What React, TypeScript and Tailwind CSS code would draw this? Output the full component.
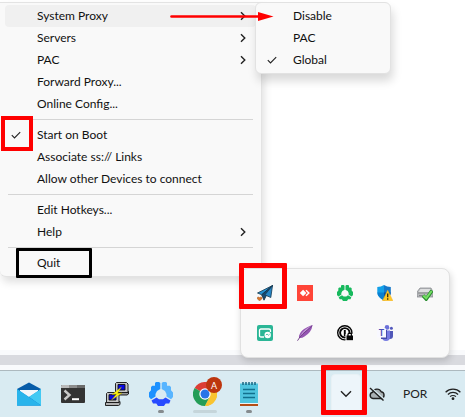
import type { ReactNode } from "react";

function Check() {
  return (
    <svg viewBox="0 0 10 10" className="h-[10px] w-[10px]" fill="none" stroke="#222" strokeWidth="1.1">
      <path d="M.8 5.2 3.5 8 9.2 2.2" />
    </svg>
  );
}

function Chevron() {
  return (
    <svg viewBox="0 0 6 10" className="h-[10px] w-[6px]" fill="none" stroke="#222" strokeWidth="1.4">
      <path d="M1 1.2 4.8 5 1 8.8" />
    </svg>
  );
}

type ItemProps = { label: string; checked?: boolean; submenu?: boolean; active?: boolean };

function Item({ label, checked, submenu, active }: ItemProps) {
  return (
    <button
      type="button"
      role={checked ? "menuitemcheckbox" : "menuitem"}
      aria-checked={checked}
      aria-haspopup={submenu ? "menu" : undefined}
      className={`flex h-[22px] w-full items-center rounded pr-[10px] text-left ${active ? "bg-[#f0f0f0]" : ""}`}
    >
      <span className="flex w-8 shrink-0 items-center pl-[6px]">{checked && <Check />}</span>
      <span className="flex-1 whitespace-nowrap">{label}</span>
      {submenu && <Chevron />}
    </button>
  );
}

function Separator() {
  return <hr className="mx-[3px] my-1 border-t border-[#d5d5d5]" />;
}

function MainMenu() {
  return (
    <div
      role="menu"
      aria-label="Shadowsocks"
      className="w-[262px] rounded-b-md border border-l-0 border-[#e3e3e3] bg-[#f9f9f9] px-[5px] py-[2px] shadow-[2px_5px_9px_rgba(0,0,0,0.13)]"
    >
      <Item label="System Proxy" submenu active />
      <Item label="Servers" submenu />
      <Item label="PAC" submenu />
      <Item label="Forward Proxy..." />
      <Item label="Online Config..." />
      <Separator />
      <Item label="Start on Boot" checked />
      <Item label="Associate ss:// Links" />
      <Item label="Allow other Devices to connect" />
      <Separator />
      <Item label="Edit Hotkeys..." />
      <Item label="Help" submenu />
      <Separator />
      <Item label="Quit" />
    </div>
  );
}

function ProxyMenu() {
  return (
    <div
      role="menu"
      aria-label="System Proxy"
      className="absolute top-[2px] left-[255px] w-[136px] rounded-md border border-[#e2e2e2] bg-[#f9f9f9] px-[5px] py-[2px] shadow-[2px_7px_10px_rgba(0,0,0,0.15)]"
    >
      <Item label="Disable" />
      <Item label="PAC" />
      <Item label="Global" checked />
    </div>
  );
}

function Plane() {
  return (
    <svg viewBox="0 0 16 16" className="h-4 w-4" strokeLinejoin="round">
      <path d="M15.5.5.5 8l4.200 1.800z" fill="#2490d0" stroke="#16384f" strokeWidth=".8" />
      <path d="M15.5.5 4.700 9.800l2.300 5.400 2-4z" fill="#174c73" stroke="#102c42" strokeWidth=".8" />
      <path d="M15.5.5 7.800 9.900l6 2.600z" fill="#2585c5" stroke="#16384f" strokeWidth=".8" />
      <path d="m2.600 16-2.400-2.300c-.5-1.600 1.400-2.400 2.400-1.100 1-1.300 2.900-.5 2.400 1.100z" fill="#d9782d" stroke="#955325" strokeWidth=".4" />
    </svg>
  );
}

function AnyDesk() {
  return (
    <svg viewBox="0 0 16 16" className="h-4 w-4">
      <path fill="#ff4538" d="M0 0h16v16H0z" />
      <path d="m6.100 4.700 3.300 3.300-3.300 3.300L2.800 8z" fill="#fff" />
      <path d="m9 5.200 2.800 2.800L9 10.800" fill="none" stroke="#fff" strokeWidth="1.500" />
    </svg>
  );
}

type RingProps = { size: string; left: string; right: string; bottom: string };

function TriRing({ size, left, right, bottom }: RingProps) {
  return (
    <svg viewBox="0 0 24 24" className={size}>
      <path d="M7 0h3l1.300 1v6L8 9l-1.500 3v2.500L2 17.200 0 15V10.500l2-2.300V5l1.300-1.300H6V1z" fill={left} />
      <path d="M17 0h-3l-1.300 1v6L16 9l1.500 3v2.500l4.500 2.700 2-2.200V10.500l-2-2.300V5l-1.300-1.300H18V1z" fill={right} />
      <path d="m2.500 18.500 5-3 2.500 1.700h4l2.500-1.700 5 3-1.300 3h-3.500L15 24H9l-1.700-2.500H4z" fill={bottom} />
    </svg>
  );
}

function Shield() {
  return (
    <svg viewBox="0 0 16 16" className="h-4 w-4">
      <path d="M7 0Q4 2 .3 2v5.500q0 4.500 6.700 8z" fill="#13a0e8" />
      <path d="M7 0q3 2 6.800 2v5.500q0 4.500-6.800 8z" fill="#1678ca" />
      <path d="M.3 7.500H7v8Q.6 12 .3 7.500z" fill="#0a7fd0" />
      <path d="M7 7.500h6.800Q13.500 12 7 15.500z" fill="#0754a5" />
      <path d="M10.700 5.200 15.800 15.700H5.500z" fill="#ffc928" stroke="#f3ad12" strokeWidth=".5" />
      <path d="M10.700 8.500v3.800m0 1v1.500" stroke="#33270a" strokeWidth="1.300" />
    </svg>
  );
}

function Drive() {
  return (
    <svg viewBox="0 0 16 16" className="h-4 w-4">
      <path d="M3 3h11l2 4v5H0V7z" fill="#b9bbbd" stroke="#808386" strokeWidth=".7" />
      <path d="M3.500 4h10L15 7H1.500z" fill="#dedfe0" />
      <path d="M1 8h14M2 10.500h5" stroke="#77797c" strokeWidth=".8" />
      <path d="m6 10.500 3.200 3.500L15 5.500" fill="none" stroke="#278b2d" strokeWidth="3.500" />
      <path d="m6.300 10.500 2.900 2.700L14.700 6" fill="none" stroke="#76e064" strokeWidth="2" />
    </svg>
  );
}

function ScreenShare() {
  return (
    <svg viewBox="0 0 16 16" className="h-4 w-4">
      <rect width="16" height="16" rx="2" fill="#2bb696" />
      <path d="M7 12H4q-1.500 0-1.500-1.500v-5Q2.500 4 4 4h8q1.500 0 1.500 1.500V7" fill="none" stroke="#fff" strokeWidth="1.300" />
      <circle cx="10.700" cy="10" r="3.200" fill="#fff" />
      <path d="m8.900 10 1.200-1 1.300 1.300 1.200-1" fill="none" stroke="#2bb696" strokeWidth=".8" />
    </svg>
  );
}

function Feather() {
  return (
    <svg viewBox="0 0 16 16" className="h-4 w-4">
      <path d="M15.500.3C12 1 5.500 4 3 8.500Q1.500 11 2 13q3 .3 5.500-1.500Q14.500 7.500 15.500.3z" fill="#9557b2" />
      <path d="M15 .8Q8 3.500 4 9.500q-1 1.500-1.500 3 3-3.500 6-6z" fill="#c69ad9" />
      <path d="M15.300.5Q10 5.500 6 8.700 3 11.500.5 15.700" fill="none" stroke="#683381" strokeWidth=".9" />
    </svg>
  );
}

function OnePassword() {
  return (
    <svg viewBox="0 0 16 16" className="h-4 w-4">
      <circle cx="7.800" cy="7.800" r="7.100" fill="#fff" stroke="#050505" strokeWidth="1.400" />
      <circle cx="7.800" cy="7.800" r="4.700" fill="#fff" stroke="#050505" strokeWidth="1.900" />
      <path d="M7.800 5v6" stroke="#050505" strokeWidth="1.900" />
      <path d="M8.500 9H16v7H8.500z" fill="#fff" />
      <path d="M9.500 10.500H16v4.700H9.500z" fill="#050505" />
      <path d="M11 11V9.500q0-1.400 1.700-1.400t1.700 1.400V11" fill="none" stroke="#050505" strokeWidth="1.200" />
    </svg>
  );
}

function Teams() {
  return (
    <span className="relative h-4 w-4">
      <svg viewBox="0 0 16 16" className="h-4 w-4">
        <circle cx="10" cy="2.400" r="2.300" fill="#6b70d9" />
        <circle cx="14.400" cy="3.300" r="1.500" fill="#5258bd" />
        <path d="M12 6h4v5q0 3-3 3h-1z" fill="#5057b8" />
        <path d="M5 5.500h8V12q0 4-4 4t-4-4z" fill="#777ce2" />
        <path d="M4 5h6v9H4z" fill="#454bab" />
        <path d="M0 3.500h9v9H0z" fill="#f8f8ff" />
      </svg>
      <span className="absolute top-[3px] left-0 w-[9px] text-center text-[9px] leading-[10px] font-bold text-[#4b50b6]">T</span>
    </span>
  );
}

const trayApps: { name: string; icon: ReactNode }[] = [
  { name: "Shadowsocks", icon: <Plane /> },
  { name: "AnyDesk", icon: <AnyDesk /> },
  { name: "Time tracker", icon: <TriRing size="h-4 w-4" left="#17b95d" right="#17b95d" bottom="#17b95d" /> },
  { name: "Windows Security", icon: <Shield /> },
  { name: "Safely remove hardware", icon: <Drive /> },
  { name: "Screen sharing", icon: <ScreenShare /> },
  { name: "Feather", icon: <Feather /> },
  { name: "1Password", icon: <OnePassword /> },
  { name: "Teams", icon: <Teams /> },
];

function TrayFlyout() {
  return (
    <div className="absolute right-[15px] bottom-[59px] grid grid-cols-5 rounded-lg border border-[#e1e1e1] bg-[#f9f9f9] p-1 shadow-[1px_3px_7px_rgba(0,0,0,0.16)]">
      {trayApps.map((app) => (
        <button key={app.name} type="button" aria-label={app.name} className="flex h-10 w-10 items-center justify-center">
          {app.icon}
        </button>
      ))}
    </div>
  );
}

function Mail() {
  return (
    <svg viewBox="0 0 24 24" className="h-6 w-6">
      <path d="M0 7 12 .5 24 7v9H0z" fill="#075ca8" />
      <path d="M3 8h18v10H3z" fill="#f3f6fa" />
      <path d="m0 7 12 8 12-8v16.500H0z" fill="#249ce0" />
      <path d="m12 15 12 8.500V7z" fill="#43c9f3" />
      <path d="m0 23.500 12-8.500 12 8.500z" fill="#168bd5" />
      <path d="m0 7 24 16.500H0z" fill="#29b4eb" />
    </svg>
  );
}

function Terminal() {
  return (
    <svg viewBox="0 0 24 24" className="h-6 w-6">
      <rect y="3" width="24" height="18" rx="1" fill="#333" />
      <path d="M0 6V4q0-1 1-1h7v3z" fill="#b9b9b9" />
      <path d="M8 3h8v3H8z" fill="#8d8d8d" />
      <path d="M16 3h7q1 0 1 1v2h-8z" fill="#6b6b6b" />
      <path d="m3.500 8.500 5 4.500-5 4.500" fill="none" stroke="#c9c9c9" strokeWidth="2.400" />
      <path d="M11 17.200h7" stroke="#fff" strokeWidth="2" />
    </svg>
  );
}

function Putty() {
  return (
    <svg viewBox="0 0 24 24" className="h-6 w-6" stroke="#111" strokeWidth=".9">
      <path d="M10 10.500h12l1.500-1v2.500l-1.500 1H10z" fill="#999" />
      <path d="M11.500.5h10L23 2v8.500H10.500V1.500z" fill="#c4c4c4" />
      <path d="M13 2.500h7v5.500h-7z" fill="#0808e6" />
      <path d="M.5 20.500h13l1.500-1v3l-1.500 1H.5z" fill="#b0b0b0" />
      <path d="M2.500 10.500h10L14 12v8.500H1.500v-9z" fill="#c4c4c4" />
      <path d="M4 12.700h7V18H4z" fill="#0808e6" />
      <path d="M16.500 5 7 12.500l4.500-.5L6.500 18l10.500-7-4.500.3z" fill="#fff314" stroke="#a49b00" strokeWidth=".4" />
    </svg>
  );
}

function Chrome() {
  return (
    <span className="relative h-6 w-6">
      <svg viewBox="0 0 24 24" className="h-6 w-6">
        <path d="M12 12 1.600 6A12 12 0 0 1 22.400 6z" fill="#dc3e35" />
        <path d="M12 12V24A12 12 0 0 1 1.600 6z" fill="#249d58" />
        <path d="m12 12 10.400-6A12 12 0 0 1 12 24l5-9z" fill="#f9c430" />
        <path d="m7.200 14.800 4.800 2.700 4.800-2.700L12 24z" fill="#249d58" />
        <path d="m16.800 14.800L12 24A12 12 0 0 0 23 7h-9z" fill="#f9c430" />
        <circle cx="12" cy="12" r="5.700" fill="#fff" />
        <circle cx="12" cy="12" r="4.500" fill="#2874e8" />
      </svg>
      <span className="absolute -top-[5px] -right-[5px] flex h-4 w-4 items-center justify-center rounded-full bg-[#bd350e] text-[9px] leading-none text-white">
        A
      </span>
    </span>
  );
}

function Notepad() {
  return (
    <svg viewBox="0 0 24 24" className="h-6 w-6">
      <path d="M3 21h18v3H3z" fill="#b44e17" />
      <path d="M3 1.500h18V22H3z" fill="#50c5df" />
      <path d="M3 21h18v1H3z" fill="#eaf4f6" />
      <path d="M6 0v3m3-3v3m3-3v3m3-3v3m3-3v3" stroke="#176782" strokeWidth="1.500" />
      <path d="M6 7.500h12M6 11.500h12M6 15.500h12" stroke="#12718e" strokeWidth="1.400" />
    </svg>
  );
}

const pinned: { name: string; icon: ReactNode; mark?: string }[] = [
  { name: "Mail", icon: <Mail /> },
  { name: "Terminal", icon: <Terminal /> },
  { name: "PuTTY", icon: <Putty /> },
  {
    name: "Time tracker",
    icon: <TriRing size="h-6 w-6" left="#1d91ff" right="#58b5ff" bottom="#284bff" />,
    mark: "w-[6px] bg-[#858b8e]",
  },
  { name: "Chrome", icon: <Chrome />, mark: "w-6 bg-[#c5d5da]" },
  { name: "Notepad", icon: <Notepad />, mark: "w-[6px] bg-[#858b8e]" },
];

function CloudOff() {
  return (
    <svg viewBox="0 0 16 14" className="h-[14px] w-4" fill="none" stroke="#222" strokeWidth="1.400">
      <path d="M4 11.500a3.200 3.200 0 0 1-.3-6.300A4.600 4.600 0 0 1 12.200 4.700a3.500 3.500 0 0 1 .3 6.800z" fill="#a9b1b4" />
      <path d="m2.500 1 12.500 11" stroke="#d9ebf2" strokeWidth="1.500" />
      <path d="m1 1 13.500 12.500" />
    </svg>
  );
}

function Wifi() {
  return (
    <svg viewBox="0 0 16 14" className="h-[14px] w-4" fill="none" stroke="#222" strokeWidth="1.200">
      <path d="M.6 5.200a10.500 10.500 0 0 1 14.800 0M2.900 7.500a7.200 7.200 0 0 1 10.200 0M5.100 9.700a4.100 4.100 0 0 1 5.800 0" />
      <circle cx="8" cy="11.700" r="1.400" fill="#222" stroke="none" />
    </svg>
  );
}

function Taskbar() {
  return (
    <footer className="flex h-[47px] items-stretch justify-between border-t border-[#adb9bf] bg-[#d9ebf2] pl-[7px]">
      <nav aria-label="Pinned apps" className="flex">
        {pinned.map((app) => (
          <button key={app.name} type="button" aria-label={app.name} className="flex w-11 flex-col items-center pt-[11px]">
            {app.icon}
            {app.mark && <span className={`mt-1 h-[3px] rounded-full ${app.mark}`} />}
          </button>
        ))}
      </nav>
      <div className="flex items-center pr-1">
        <button
          type="button"
          aria-label="Show hidden icons"
          className="mr-2 flex h-10 w-[30px] items-center justify-center rounded border border-[#e8f1f5] bg-[#edf5fa]"
        >
          <svg viewBox="0 0 12 8" className="h-2 w-3" fill="none" stroke="#222" strokeWidth="1.400">
            <path d="m1 1.200 5 5 5-5" />
          </svg>
        </button>
        <button type="button" aria-label="OneDrive" className="mr-[18px]">
          <CloudOff />
        </button>
        <button type="button" className="mr-[18px] w-6 text-[#222]">
          POR
        </button>
        <button type="button" aria-label="Wi-Fi">
          <Wifi />
        </button>
      </div>
    </footer>
  );
}

function Annotations() {
  return (
    <div aria-hidden="true" className="pointer-events-none">
      <div className="absolute top-[116px] left-px h-[35px] w-8 border-4 border-[#f00]" />
      <div className="absolute top-[248px] left-4 h-[30px] w-[76px] rounded-[1px] border-[3px] border-black" />
      <div className="absolute right-[178px] bottom-[108px] h-[46px] w-12 rounded-[1px] border-[5px] border-[#f00]" />
      <div className="absolute right-[98px] bottom-[2px] h-[50px] w-[46px] rounded-[1px] border-[5px] border-[#f00]" />
      <svg viewBox="0 0 104 10" className="absolute top-[11px] left-[170px] h-[10px] w-[104px]">
        <path d="M1.500 5.500H90" stroke="#f00" strokeWidth="2.600" strokeLinecap="round" />
        <path d="M88 1v9l15.500-4.500z" fill="#f00" />
      </svg>
    </div>
  );
}

export default function App() {
  return (
    <div className="relative flex min-h-screen flex-col overflow-hidden bg-white font-['Lato','Open_Sans',sans-serif] text-[12px] leading-4 text-[#111]">
      <main className="flex-1 pt-[2px]">
        <MainMenu />
      </main>
      <div className="h-[20px] border-t-[5px] border-b-[5px] border-[#f9fafc] bg-[#d9dadf]" />
      <Taskbar />
      <ProxyMenu />
      <TrayFlyout />
      <Annotations />
    </div>
  );
}
